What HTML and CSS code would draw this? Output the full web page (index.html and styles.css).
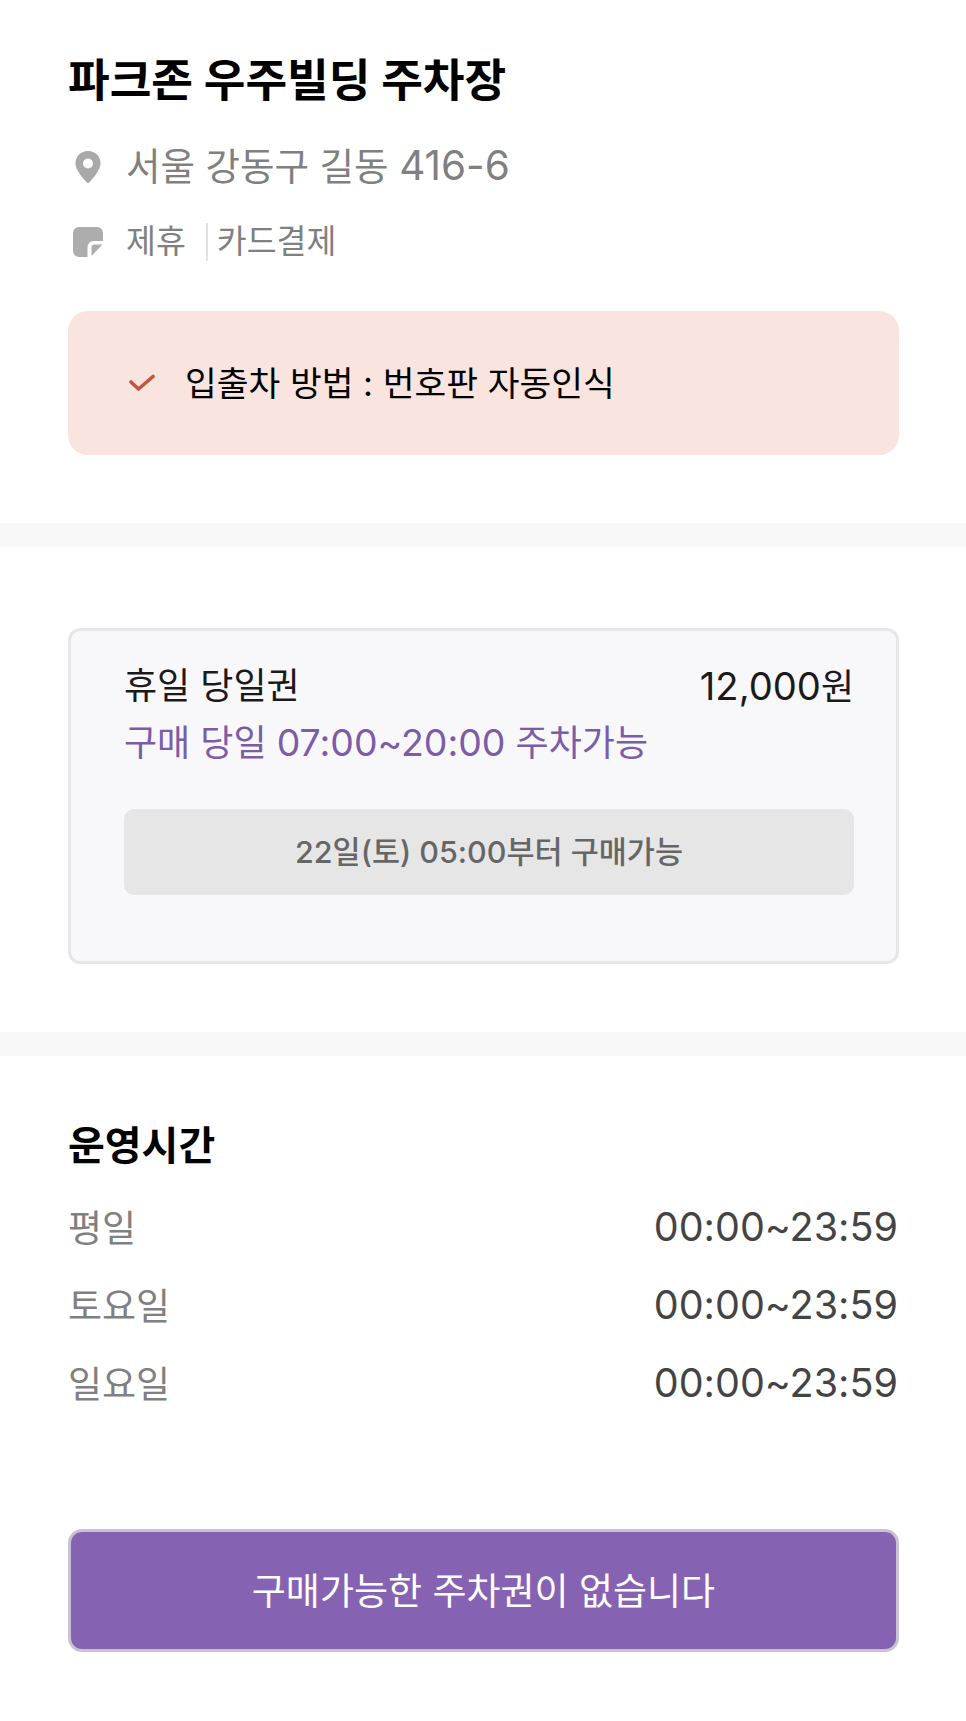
FILE: index.html
```html
<!DOCTYPE html>
<html lang="ko">
<head>
    <meta charset="UTF-8">
    <meta name="viewport" content="width=device-width, initial-scale=1.0">
    <title>파크존 우주빌딩 주차장</title>
    <link rel="stylesheet" href="styles.css">
</head>
<body>
    <section class="info">
        <h1>파크존 우주빌딩 주차장</h1>
        <div class="address">
            <svg class="icon" viewBox="0 0 28 34" width="28" height="34">
                <path fill="#a9a9a9" fill-rule="evenodd" d="M14 1C6.8 1 1.5 6.4 1.5 13.2c0 4.6 3 9.9 11 19.1.8.9 2.200.9 3 0 8-9.200 11-14.500 11-19.100C26.500 6.400 21.200 1 14 1zm0 7.500a5 5 0 1 1 0 10 5 5 0 0 1 0-10z"/>
            </svg>
            <span>서울 강동구 길동 <span class="num">416-6</span></span>
        </div>
        <div class="tags">
            <svg class="icon" viewBox="0 0 30 30" width="30" height="30">
                <path fill="#adadad" d="M6 0h18a6 6 0 0 1 6 6v8h-9.500a6 6 0 0 0-6 6v10H6a6 6 0 0 1-6-6V6a6 6 0 0 1 6-6z"/>
                <path fill="#adadad" d="M18.500 29v-8.500a3 3 0 0 1 3-3h8z"/>
            </svg>
            <span class="tag">제휴</span>
            <span class="tag tag-line">카드결제</span>
        </div>
        <div class="notice">
            <svg viewBox="0 0 26 18" width="26" height="18">
                <path fill="none" stroke="#c4553f" stroke-width="3.600" stroke-linecap="round" stroke-linejoin="round" d="M2 8l7.500 7L24 2.500"/>
            </svg>
            <span class="notice-text">입출차 방법 : 번호판 자동인식</span>
        </div>
    </section>

    <div class="divider"></div>

    <section class="tickets">
        <div class="ticket">
            <div class="ticket-head">
                <span>휴일 당일권</span>
                <span><span class="num">12,000</span>원</span>
            </div>
            <div class="ticket-time">구매 당일 <span class="num">07:00~20:00</span> 주차가능</div>
            <div class="ticket-btn">22일(토) 05:00부터 구매가능</div>
        </div>
    </section>

    <div class="divider"></div>

    <section class="hours">
        <h2>운영시간</h2>
        <div class="hours-row"><span class="day">평일</span><b>00:00~23:59</b></div>
        <div class="hours-row"><span class="day">토요일</span><b>00:00~23:59</b></div>
        <div class="hours-row"><span class="day">일요일</span><b>00:00~23:59</b></div>
    </section>

    <div class="footer">
        <button class="buy-btn">구매가능한 주차권이 없습니다</button>
    </div>
</body>
</html>
```

FILE: styles.css
```css
* {
    box-sizing: border-box;
}
body {
    margin: 0;
    background-color: #fff;
    font-family: Inter, 'Noto Sans CJK KR', sans-serif;
    font-feature-settings: "calt" 0;
    color: #000;
}
.num {
    font-size: 1.04em;
}
.info {
    padding: 50px 67px 68px 68px;
}
h1 {
    margin: 0;
    font-size: 45.300px;
    line-height: 62px;
    font-weight: 700;
}
.address {
    display: flex;
    align-items: center;
    margin-top: 29px;
    font-size: 37.500px;
    line-height: 50px;
    color: #808080;
}
.address .num {
    font-size: 1.08em;
}
.address .icon {
    margin-left: 6px;
    margin-right: 24px;
}
.tags {
    display: flex;
    align-items: center;
    height: 46px;
    margin-top: 27px;
    font-size: 32.500px;
    line-height: 38px;
    color: #808080;
}
.tags .icon {
    margin-left: 5px;
    margin-right: 23px;
}
.tag-line {
    margin-left: 20px;
    padding-left: 9px;
    border-left: 2px solid #e2e2e2;
}
.notice {
    display: flex;
    align-items: center;
    gap: 30px;
    height: 144px;
    margin-top: 46px;
    padding-left: 61px;
    background-color: #f9e4df;
    border-radius: 20px;
    font-size: 34.500px;
}
.notice-text {
    margin-bottom: 4px;
}
.divider {
    height: 24px;
    background-color: #f8f8f9;
}
.tickets {
    padding: 81px 67px 68px 68px;
}
.ticket {
    height: 336px;
    padding: 28px 42px 0 53px;
    background-color: #f8f8fb;
    border: 3px solid #e7e7e9;
    border-radius: 12px;
}
.ticket-head {
    display: flex;
    justify-content: space-between;
    font-size: 36px;
    line-height: 54px;
    color: #1a1a1a;
}
.ticket-head .num {
    font-size: 1.06em;
}
.ticket-time {
    margin-top: 2px;
    font-size: 36px;
    line-height: 54px;
    color: #7a5ca8;
}
.ticket-btn {
    height: 86px;
    margin-top: 39px;
    background-color: #e6e6e6;
    border-radius: 10px;
    font-size: 30.500px;
    font-weight: 500;
    line-height: 86px;
    text-align: center;
    color: #666;
}
.hours {
    padding: 60px 68px 0;
}
h2 {
    margin: 0 0 12px;
    font-size: 40px;
    line-height: 60px;
    font-weight: 700;
}
.hours-row {
    display: flex;
    justify-content: space-between;
    height: 78px;
    align-items: center;
    font-size: 37px;
    color: #808080;
}
.hours-row .day {
    margin-bottom: 3px;
}
.hours-row b {
    font-size: 39.500px;
    font-weight: 400;
    color: #444;
}
.footer {
    padding: 107px 67px 68px 68px;
}
.buy-btn {
    display: block;
    width: 100%;
    height: 123px;
    padding: 0 0 3px;
    background-color: #8662b3;
    border: 3px solid #c8c2d4;
    border-radius: 14px;
    font-family: inherit;
    font-size: 37px;
    color: #fff;
}
```
